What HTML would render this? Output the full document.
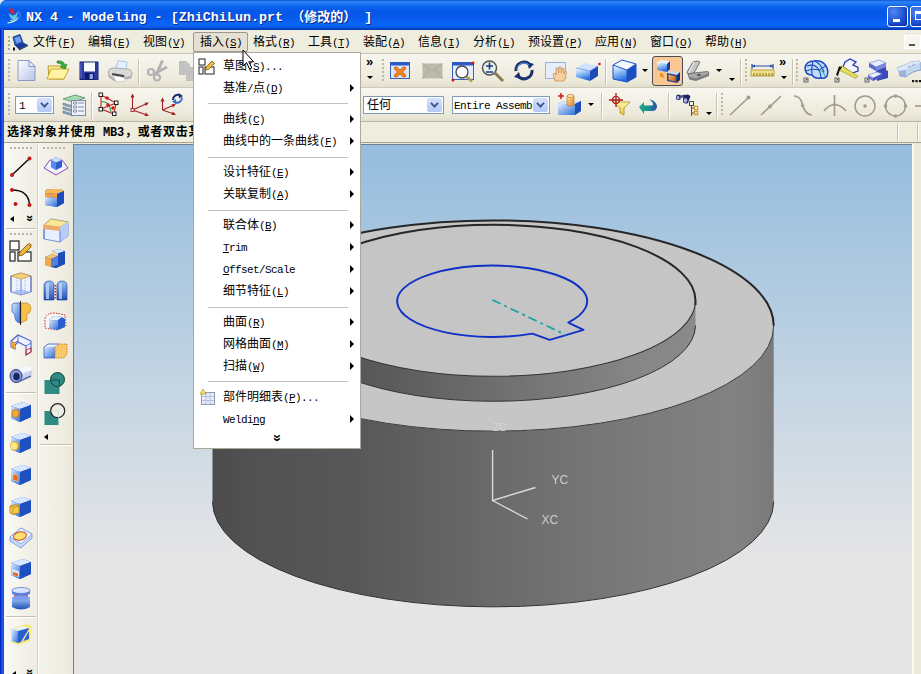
<!DOCTYPE html>
<html lang="zh"><head><meta charset="utf-8"><title>NX 4 - Modeling</title>
<style>
html,body{margin:0;padding:0}
body{width:921px;height:674px;overflow:hidden;position:relative;background:#ECE9D8;font:12px/14px "Liberation Sans","Noto Sans CJK SC",sans-serif;color:#000}
.abs{position:absolute}
svg{overflow:visible}
div{position:absolute;box-sizing:border-box}
.l{font-family:"Liberation Mono","Noto Sans CJK SC",monospace;font-size:11px;letter-spacing:-0.6px}
u{text-decoration:underline}
.title{left:0;top:0;width:921px;height:30px;background:linear-gradient(#0c55d8 0,#2f86f8 2px,#1c74f4 4px,#0a62ec 7px,#0658e8 11px,#0658ea 17px,#0a60f4 21px,#0c66f8 25px,#0a5cec 27px,#0446c8 28.5px,#0038a8 30px)}
.ttext{left:26px;top:8px;color:#fff;font:bold 13.4px/16px "Liberation Mono","Noto Sans CJK SC",monospace;white-space:pre;text-shadow:1px 1px 0 #0a2a80}
.tz{font:bold 13px/16px "Noto Sans CJK SC",sans-serif;letter-spacing:0}
.tbtn{top:6px;width:21px;height:21px;border:1px solid #fff;border-radius:3px;background:radial-gradient(circle at 30% 25%,#4f86f0,#1c50d0 60%,#0d3bb8);box-shadow:inset -1px -1px 2px #0a2f9c}
.tbtn i{position:absolute;display:block}
.menubar{left:4px;top:30px;width:917px;height:24px;background:#EFEDDE;border-bottom:1px solid #C9C6B6}
.mi{top:35px;height:14px;white-space:nowrap}
.mhot{left:193px;top:32px;width:55px;height:20px;background:#E4E1D2;border:1px solid #9D9A8C;border-radius:2px}
.mdibtn{left:904px;top:35px;width:17px;height:14px;background:#F6F5EE;border:1px solid #fff}
.mdibtn i{position:absolute;left:4px;top:8px;width:6px;height:2px;background:#555}
.tb1{left:4px;top:54px;width:917px;height:34px;background:linear-gradient(#F7F6EF,#EDEADB 80%,#E2DFCE);border-bottom:1px solid #CFCBB9}
.tb2{left:4px;top:88px;width:917px;height:34px;background:linear-gradient(#F7F6EF,#EDEADB 80%,#E2DFCE);border-bottom:1px solid #B9B6A6}
.grip{width:2px;background:repeating-linear-gradient(#BAB7A6 0,#BAB7A6 2px,transparent 2px,transparent 4px)}
.hgrip{height:2px;background:repeating-linear-gradient(90deg,#BAB7A6 0,#BAB7A6 2px,transparent 2px,transparent 4px)}
.vsep{width:2px;border-left:1px solid #C5C2B2;border-right:1px solid #fff}
.chev{font:bold 13px/10px "Liberation Sans",sans-serif;letter-spacing:-1px;width:12px;height:10px}
.vchev{font:bold 12px/10px "Liberation Sans",sans-serif;width:10px;height:12px;transform:rotate(90deg)}
.dd{width:0;height:0;border:3px solid transparent;border-top:3px solid #000;border-bottom:0}
.tri-l{width:0;height:0;border:3px solid transparent;border-right:4px solid #000;border-left:0}
.pressed{width:31px;height:30px;background:#F9C792;border:1px solid #4B4B5A;border-radius:3px}
.combo{height:18px;background:#fff;border:1px solid #7F9DB9;padding:1px 0 0 3px;white-space:nowrap;overflow:hidden}
.combo b{position:absolute;right:1px;top:1px;width:15px;height:14px;background:linear-gradient(#D5E0FB,#B4C8F6);border-radius:2px}
.combo b:after{content:"";position:absolute;left:4px;top:2px;width:7px;height:7px;border-right:2.5px solid #3A4F8A;border-bottom:2.5px solid #3A4F8A;transform:rotate(45deg) scale(.85);box-sizing:border-box}
.status{left:4px;top:122px;width:917px;height:21px;background:#EFEDDE;border-bottom:1px solid #A5A294}
.stext{left:7px;top:125px;font:bold 12px/14px "Liberation Sans","Noto Sans CJK SC",sans-serif;white-space:nowrap;width:186px;overflow:hidden;letter-spacing:.7px}
.stext .l{font-weight:bold;font-size:12px;letter-spacing:-.2px;margin-left:3px;margin-right:1px}
.stsep{top:124px;width:2px;height:17px;border-left:1px solid #C5C2B2;border-right:1px solid #fff}
.leftbar{left:4px;top:143px;width:70px;height:531px;background:linear-gradient(90deg,#F9F9F5,#EFEDE2 46%,#F4F3EB 50%,#ECE9DB)}
.lsep{left:37px;top:145px;width:2px;height:529px;border-left:1px solid #D4D1C2;border-right:1px solid #fff}
.hline{height:2px;border-top:1px solid #C5C2B2;border-bottom:1px solid #fff}
.popup{left:193px;top:52px;width:168px;height:397px;background:#fff;border:1px solid #ABA89C}
.pshadow{display:none}
.pi{left:29px;height:22px;line-height:22px;white-space:nowrap}
.parr{left:156px;width:0;height:0;border:4px solid transparent;border-left:4px solid #000;border-right:0}
.psep{left:14px;width:140px;height:1px;background:#C5C2B8}
.pchev{left:78px;top:380px;font:bold 14px/10px "Liberation Sans",sans-serif;transform:rotate(90deg);width:10px;height:12px}
.wbl{left:0;top:29px;width:4px;height:645px;background:linear-gradient(90deg,#001DB8,#0A34D4 30%,#2260EC 62%,#1244BC)}

</style></head>
<body>
<svg class="abs" width="0" height="0" style="left:0;top:0"><defs>
<linearGradient id="gb" x1="0" y1="0" x2="1" y2="1"><stop offset="0" stop-color="#DCEBFF"/><stop offset="1" stop-color="#2E6FD8"/></linearGradient>
<linearGradient id="gb2" x1="0" y1="0" x2="0" y2="1"><stop offset="0" stop-color="#9CC4F5"/><stop offset="1" stop-color="#1F4FB8"/></linearGradient>
<linearGradient id="gy" x1="0" y1="0" x2="0" y2="1"><stop offset="0" stop-color="#FFF6A8"/><stop offset="1" stop-color="#E8C63A"/></linearGradient>
<linearGradient id="go" x1="0" y1="0" x2="1" y2="1"><stop offset="0" stop-color="#FFE0A0"/><stop offset="1" stop-color="#E88A20"/></linearGradient>
<linearGradient id="gw" x1="0" y1="0" x2="1" y2="1"><stop offset="0" stop-color="#FFFFFF"/><stop offset="1" stop-color="#B8C4E8"/></linearGradient>
<linearGradient id="gcf" x1="0" y1="0" x2=".3" y2="1"><stop offset="0" stop-color="#FFFFFF"/><stop offset=".45" stop-color="#9CC6F8"/><stop offset="1" stop-color="#2A6FE0"/></linearGradient>
<linearGradient id="go2" x1="0" y1="0" x2="1" y2="1"><stop offset="0" stop-color="#F8B060"/><stop offset="1" stop-color="#C86010"/></linearGradient>
<linearGradient id="gg" x1="0" y1="0" x2="1" y2="1"><stop offset="0" stop-color="#E8E8E8"/><stop offset="1" stop-color="#8A8A8A"/></linearGradient>
</defs></svg>
<div class="title"></div>
<svg class="abs" style="left:6px;top:7px" width="18" height="18" viewBox="0 0 18 18"><path d="M3 2 L8 1.500 L8.500 7 L5.500 7.500Z" fill="#D82030"/><path d="M2.500 6 Q4 12 8 13 Q11 11 12.500 4 Q9 9 6 8.500Z" fill="#58C8E8"/><path d="M11 3.500 Q15.500 4 15 9 Q14 13 10 14 Q13.500 11 13 7.500Z" fill="#3A70E0"/><path d="M1 15.500 Q7 15 13 10.500 Q10 15.500 2 16.500Z" fill="#E8F8F0"/><path d="M4 13.500 Q8 14 12 10" stroke="#9AE0C8" stroke-width="1" fill="none"/></svg>
<div class="ttext">NX 4 - Modeling - [ZhiChiLun.prt <span class="tz">（修改的）</span> ]</div>
<div class="tbtn" style="left:887px"><i style="left:5px;top:12px;width:7px;height:3px;background:#fff"></i></div>
<div class="tbtn" style="left:910px"><i style="left:4px;top:4px;width:9px;height:9px;border:1px solid #fff;border-top-width:3px;box-sizing:border-box"></i></div>
<svg class="abs" style="left:0;top:0" width="6" height="6" viewBox="0 0 6 6"><path d="M0 0 H5 Q1 1 0 5Z" fill="#E8ECF4"/></svg>
<div class="menubar"></div>
<svg class="abs" style="left:6px;top:33px" width="24" height="18" viewBox="0 0 24 18"><g fill="#A8B090"><rect x="2" y="3" width="2" height="2"/><rect x="2" y="7" width="2" height="2"/><rect x="2" y="11" width="2" height="2"/><rect x="2" y="15" width="2" height="2"/></g><path d="M7 4 L14 1.500 L17 9.500 L9 12.500Z" fill="#2A5CC8" stroke="#12308A" stroke-width=".8"/><path d="M8.500 5 L13.500 3.200 L15.500 8.500 L10.500 10.500Z" fill="#6FA0F0"/><path d="M9 12.500 L17 9.500 L22 12 L13 16.500Z" fill="#1A3A98"/><path d="M13 16.500 L22 12 L22 13 L13 17.500Z" fill="#0A1A58"/><rect x="7" y="14.500" width="2" height="3" fill="#111"/></svg>
<div class="mhot"></div>
<div class="mi" style="left:33px">文件<span class="l">(<u>F</u>)</span></div>
<div class="mi" style="left:88px">编辑<span class="l">(<u>E</u>)</span></div>
<div class="mi" style="left:143px">视图<span class="l">(<u>V</u>)</span></div>
<div class="mi" style="left:200px">插入<span class="l">(<u>S</u>)</span></div>
<div class="mi" style="left:253px">格式<span class="l">(<u>R</u>)</span></div>
<div class="mi" style="left:308px">工具<span class="l">(<u>T</u>)</span></div>
<div class="mi" style="left:363px">装配<span class="l">(<u>A</u>)</span></div>
<div class="mi" style="left:418px">信息<span class="l">(<u>I</u>)</span></div>
<div class="mi" style="left:473px">分析<span class="l">(<u>L</u>)</span></div>
<div class="mi" style="left:528px">预设置<span class="l">(<u>P</u>)</span></div>
<div class="mi" style="left:595px">应用<span class="l">(<u>N</u>)</span></div>
<div class="mi" style="left:650px">窗口<span class="l">(<u>O</u>)</span></div>
<div class="mi" style="left:705px">帮助<span class="l">(<u>H</u>)</span></div>
<div class="mdibtn"><i></i></div>
<div class="tb1"></div><div class="tb2"></div>
<div class="grip" style="left:8px;top:59px;height:24px"></div>
<svg class="abs" style="left:15px;top:58px" width="24" height="24" viewBox="0 0 24 24"><path d="M3 2.5 H14 L20 8.5 V22.5 H3Z" fill="url(#gw)" stroke="#8C9AC8" stroke-width="1"/><path d="M14 2.5 V8.5 H20Z" fill="#E8EEFF" stroke="#8C9AC8" stroke-width="1"/></svg>
<svg class="abs" style="left:45px;top:58px" width="24" height="24" viewBox="0 0 24 24"><path d="M3 8 L4 21 H19 L21 8Z" fill="url(#gy)" stroke="#B89A28" stroke-width="1"/><path d="M2 21 L6 11 H24 L19 21Z" fill="#FFF2A0" stroke="#C8A830" stroke-width="1"/><path d="M12 3 Q18 2 20 7 L22 6 L20 11 L15 9 L17.5 8 Q16 5 12 5Z" fill="#3CA83C" stroke="#1E7A1E" stroke-width=".6"/></svg>
<svg class="abs" style="left:77px;top:58px" width="24" height="24" viewBox="0 0 24 24"><rect x="3" y="4" width="18" height="17.500" fill="#2A3AA0"/><rect x="3" y="4" width="18" height="17.500" fill="none" stroke="#18247A" stroke-width="1"/><rect x="7" y="4.500" width="11" height="9" fill="#F8FAFF"/><rect x="8" y="15" width="9" height="6.500" fill="#101A60"/><rect x="12.500" y="16" width="3.500" height="5" fill="#8AA0E0"/><path d="M4 5 V20" stroke="#5A70D0" stroke-width="1"/></svg>
<svg class="abs" style="left:107px;top:58px" width="24" height="24" viewBox="0 0 24 24"><path d="M11 2.500 L20 4 L18.500 13 L8.500 12Z" fill="#E4F0FF" stroke="#9AB8E0" stroke-width=".8"/><path d="M1.500 13 Q2 10 6 10 L21 11 Q25 12 25 15 L24 20 L8 23 L2 19Z" fill="#DADADA" stroke="#9A9A9A" stroke-width=".8"/><path d="M5 15 L17 17 L17.500 19.500 L5.500 17.500Z" fill="#444"/><path d="M2 19 L8 23 L24 20 L24 18 L8 21 L2 17Z" fill="#B0B0B0"/><path d="M6 17.500 L17 19.500 L19 23 L9 23.500Z" fill="#fff" stroke="#AAA" stroke-width=".5"/></svg>
<div class="vsep" style="left:138px;top:59px;height:26px"></div>
<svg class="abs" style="left:145px;top:58px" width="24" height="24" viewBox="0 0 24 24"><g stroke="#B2B2B2" fill="none"><path d="M17.500 2.500 L12 15 M22 9 L10 15.500" stroke-width="3"/><circle cx="6" cy="14" r="3" stroke-width="2.200"/><circle cx="12" cy="19.500" r="3" stroke-width="2.200"/></g></svg>
<svg class="abs" style="left:176px;top:58px" width="24" height="24" viewBox="0 0 24 24"><path d="M3 3 H10 L14 7 V9 H17 L21 13 V23 H10 V17 H3Z" fill="#BDBDBD"/><path d="M3 6 H14 M3 9 H14 M3 12 H21 M3 15 H21 M10 18 H21 M10 21 H21 M6 3 V17 M9 3 V17 M12 5 V23 M15 9 V23 M18 10 V23" stroke="#CFCFCF" stroke-width=".6"/></svg>
<div class="chev" style="left:366px;top:57px">»</div>
<div class="dd" style="left:367px;top:76px"></div>
<div class="grip" style="left:382px;top:59px;height:24px"></div>
<svg class="abs" style="left:388px;top:58px" width="24" height="24" viewBox="0 0 24 24"><rect x="2.500" y="4.500" width="19" height="16" fill="#DCE6FA" stroke="#3A5FC0" stroke-width="1"/><rect x="2.500" y="4.500" width="19" height="3" fill="#2C58C8"/><path d="M6.500 9 L9 9 L12 12 L15 9 L17.500 9 L17.500 11.500 L14.500 14 L17.500 16.500 L17.500 19 L15 19 L12 16 L9 19 L6.500 19 L6.500 16.500 L9.500 14 L6.500 11.500Z" fill="#F08020" stroke="#C05808" stroke-width=".6"/></svg>
<svg class="abs" style="left:418px;top:58px" width="24" height="24" viewBox="0 0 24 24"><rect x="4.500" y="5.500" width="20" height="15" fill="#BDBAAC"/><path d="M4.500 5.500 L14.500 13 L24.500 5.500 M4.500 20.500 L12 11 M24.500 20.500 L17 11" stroke="#B0AD9E" stroke-width="1.200" fill="none"/></svg>
<svg class="abs" style="left:449px;top:58px" width="24" height="24" viewBox="0 0 24 24"><rect x="3.5" y="4.5" width="21" height="17" fill="#E6EEFC" stroke="#3A5FC0" stroke-width="1"/><rect x="3.5" y="4.5" width="21" height="3" fill="#2C58C8"/><circle cx="13" cy="14" r="6" fill="#fff" fill-opacity=".7" stroke="#444" stroke-width="1.3"/><path d="M17.5 18.5 L23 23.5" stroke="#B89A50" stroke-width="2.6"/><circle cx="24" cy="5" r="1.5" fill="#C81818"/><circle cx="4" cy="22" r="1.5" fill="#C81818"/></svg>
<svg class="abs" style="left:480px;top:58px" width="24" height="24" viewBox="0 0 24 24"><circle cx="9.5" cy="10" r="7" fill="#E8F0E8" stroke="#555" stroke-width="1.5"/><path d="M6 8 H13 M9.5 4.5 V11.5 M6 14 H13" stroke="#1A3A8A" stroke-width="1.6"/><path d="M15 15 L23 23" stroke="#8A7A50" stroke-width="3"/></svg>
<svg class="abs" style="left:512px;top:58px" width="24" height="24" viewBox="0 0 24 24"><path d="M4 13 A8 8 0 0 1 18 7" stroke="#1A3070" stroke-width="3" fill="none"/><path d="M20 12 A8 8 0 0 1 6 18" stroke="#1A3070" stroke-width="3" fill="none"/><path d="M15 4 L22 6 L17 11Z" fill="#1A3070"/><path d="M9 21 L2 19 L7 14Z" fill="#1A3070"/><path d="M5 12 A7 7 0 0 1 17 7" stroke="#6A9AE8" stroke-width="1" fill="none"/></svg>
<svg class="abs" style="left:542px;top:58px" width="24" height="24" viewBox="0 0 24 24"><rect x="3.5" y="4.500" width="20" height="16" fill="#E6EEFC" stroke="#9AB0E0" stroke-width="1"/><path d="M13 23 L11 16 L13 15 L14 17 L14 10 L16 10 L16.500 15 L17 9 L19 9 L19.500 15 L20.500 10 L22 10.500 L22 16 L23 13 L24.500 13.500 L23.500 20 L22 23Z" fill="#F8D0A0" stroke="#C89058" stroke-width=".8"/></svg>
<svg class="abs" style="left:573px;top:58px" width="24" height="24" viewBox="0 0 24 24"><path d="M3 10 L12 5 L25 8 L17 13Z" fill="#CFE2FF"/><path d="M3 10 L17 13 V23 L3 19Z" fill="url(#gcf)"/><path d="M17 13 L25 8 V18 L17 23Z" fill="#1B4CB8"/><path d="M3 10 L17 13 L25 8" stroke="#5A8AE0" stroke-width=".7" fill="none"/><circle cx="26.500" cy="6" r="1.300" fill="#D01818"/></svg>
<div class="vsep" style="left:605px;top:59px;height:26px"></div>
<svg class="abs" style="left:611px;top:58px" width="24" height="24" viewBox="0 0 24 24"><path d="M2 7 L11 2 L25 6 L16 12Z" fill="#F4F9FF"/><path d="M2 7 L16 12 V24 L2 21Z" fill="url(#gcf)"/><path d="M16 12 L25 6 V19 L16 24Z" fill="#1C4FBE"/><path d="M2 7 L11 2 L25 6 V19 L16 24 L2 21Z M2 7 L16 12 L25 6 M16 12 V24" fill="none" stroke="#1A55C8" stroke-width="1"/></svg>
<div class="dd" style="left:642px;top:69px"></div>
<div class="pressed" style="left:652px;top:56px"></div>
<svg class="abs" style="left:655px;top:58px" width="24" height="24" viewBox="0 0 24 24"><path d="M2 4 L6 2 L15 3 L12 6Z" fill="#EAF3FF"/><path d="M2 4 L12 6 V14 L2 12Z" fill="url(#gcf)"/><path d="M12 6 L15 3 V11 L12 14Z" fill="#163E9A"/><path d="M12 15 L16 13 L25 14 L22 17Z" fill="#C8D8F0"/><path d="M12 15 L22 17 V25 L12 23Z" fill="#2C4A90"/><path d="M13.500 16.800 L20.500 18.200 V23.400 L13.500 22Z" fill="url(#go2)"/><path d="M22 17 L25 14 V22 L22 25Z" fill="#142E70"/><path d="M5 15 l4 1.200 l-1.500 1 l2 1.800 l-1.200 1 l-2 -1.800 l-1.300 1Z" fill="#E88A18"/></svg>
<svg class="abs" style="left:684px;top:58px" width="24" height="24" viewBox="0 0 24 24"><path d="M9 4 L13 3 L16 4 L10 15 L4 16 L3 14Z" fill="#C4C4C4" stroke="#6A6A6A" stroke-width=".9"/><path d="M9 4 L10 5 L4.500 15" stroke="#EEE" stroke-width="1" fill="none"/><path d="M4 16 L10 15 L24 13.500 L25 16 L12 21 L5 19.500Z" fill="#A8A8A8" stroke="#6A6A6A" stroke-width=".9"/><path d="M5 19.500 L12 21 L25 16 V18 L12 23 L5 21.500Z" fill="#7C7C7C"/><ellipse cx="15" cy="17" rx="2.200" ry="1" fill="#555"/></svg>
<div class="dd" style="left:716px;top:69px"></div>
<div class="dd" style="left:729px;top:78px"></div>
<div class="vsep" style="left:740px;top:59px;height:26px"></div>
<div class="grip" style="left:745px;top:59px;height:24px"></div>
<svg class="abs" style="left:750px;top:61px" width="24" height="24" viewBox="0 0 24 24"><rect x="1" y="9" width="23" height="6" fill="#F2E28A" stroke="#B8A040" stroke-width="1"/><path d="M4 12 V15 M7 12 V15 M10 12 V15 M13 12 V15 M16 12 V15 M19 12 V15 M22 12 V15" stroke="#8A7420" stroke-width="1"/><path d="M2 5 H23 M2 3 V8 M23 3 V8" stroke="#2A4AA8" stroke-width="1.2"/><path d="M2 5 L5 3.500 V6.500Z M23 5 L20 3.500 V6.500Z" fill="#2A4AA8"/></svg>
<div class="chev" style="left:779px;top:57px">»</div>
<div class="dd" style="left:781px;top:76px"></div>
<div class="vsep" style="left:792px;top:59px;height:26px"></div>
<div class="grip" style="left:796px;top:59px;height:24px"></div>
<svg class="abs" style="left:803px;top:58px" width="24" height="24" viewBox="0 0 24 24"><path d="M2 10 Q3 3 11 3 Q19 2 23 8 Q26 13 24 18 Q22 21 18 20 Q12 21 9 17 Q2 17 2 10Z" fill="#BFDDF8" stroke="#1F48C0" stroke-width="1.500"/><path d="M4 8 Q12 5 16 12 Q18 16 18 20 M10 3 Q8 10 9 17 M3 13 Q10 10 16 12 Q21 9 23 8 M12 3 Q18 6 21 14" stroke="#1F48C0" stroke-width="1.100" fill="none"/><path d="M16 12 Q20 12 22 18" stroke="#2AA8A0" stroke-width="1.100" fill="none"/><rect x="1" y="20" width="4" height="4" fill="#F4F4F4" stroke="#444" stroke-width=".8"/><path d="M2 22.800 L4 21.200 M4 21.200 h-1.300 M4 21.200 v1.300" stroke="#222" stroke-width=".6" fill="none"/></svg>
<svg class="abs" style="left:834px;top:58px" width="24" height="24" viewBox="0 0 24 24"><path d="M11 4 L16 1 L22 4 L19 7 L24 9.500 L24 13 L18 15 L9 9Z" fill="#F2F4FF" stroke="#2838B0" stroke-width="1.300"/><path d="M5 9 L8 8 L24 18 L22 20.500 L5 12Z" fill="#E6DC58" stroke="#9A9020" stroke-width=".6"/><path d="M2 17 L5 8.500 L8 9 L5.500 13 L4 18Z" fill="#111"/><rect x="1" y="20" width="4" height="4" fill="#F4F4F4" stroke="#444" stroke-width=".8"/><path d="M2 22.800 L4 21.200 M4 21.200 h-1.300 M4 21.200 v1.300" stroke="#222" stroke-width=".6" fill="none"/></svg>
<svg class="abs" style="left:865px;top:58px" width="24" height="24" viewBox="0 0 24 24"><path d="M4 5 L14 2 L21 5 L11 9Z" fill="#E8ECFF" stroke="#8A98E0" stroke-width=".8"/><path d="M4 5 L11 9 V13 L4 9Z" fill="#5A68D0"/><path d="M11 9 L21 5 V12 L23 13 V20 L12 23 V16 L11 15Z" fill="#3A48B8"/><path d="M11 9 L21 5 V9 L11 13Z" fill="#7A88E0"/><path d="M3 17 L12 14 L17 16 L8 20Z" fill="#EEF0FF" stroke="#8A98E0" stroke-width=".8"/><path d="M3 17 L8 20 V23 L3 20Z" fill="#6A78D8"/><path d="M8 20 L17 16 V19 L8 23Z" fill="#4A58C0"/><rect x="0" y="20" width="4" height="4" fill="#F4F4F4" stroke="#444" stroke-width=".8"/><path d="M1 22.800 L3 21.200 M3 21.200 h-1.300 M3 21.200 v1.300" stroke="#222" stroke-width=".6" fill="none"/></svg>
<svg class="abs" style="left:896px;top:58px" width="24" height="24" viewBox="0 0 24 24"><path d="M1 10 L9 7 Q15 3 22 3 L25 5 V12 Q16 13 10 19 L4 18 L3 13Z" fill="#C4D6EE" stroke="#7A96C8" stroke-width=".9"/><path d="M1 10 L9 7 Q15 3 22 3 L25 5 Q15 6 10 12 L3 13Z" fill="#DCE8F8"/><path d="M3 13 L10 12 L10 19 L4 18Z" fill="#9AB4DC"/><path d="M12 9 l3 -1 M16 7.500 l3 -1" stroke="#7A96C8" stroke-width=".8"/><rect x="16" y="22" width="2.200" height="2.200" fill="#111"/><rect x="19.400" y="22" width="2.200" height="2.200" fill="#111"/><rect x="22.800" y="22" width="2.200" height="2.200" fill="#111"/></svg>
<div class="grip" style="left:8px;top:93px;height:24px"></div>
<div class="combo" style="left:15px;top:96px;width:39px"><span class="l">1</span><b></b></div>
<svg class="abs" style="left:61px;top:92px" width="24" height="24" viewBox="0 0 24 24"><path d="M2 7 L14 3 L24 6 L12 10Z" fill="#A8D8B0" stroke="#5A8A6A" stroke-width=".8"/><path d="M2 11 L12 14 L12 16 L2 13Z M2 15 L12 18 L12 20 L2 17Z M2 19 L12 22 L12 24 L2 21Z" fill="#8AA8C0" stroke="#5A7088" stroke-width=".6"/><rect x="10.500" y="8.500" width="14" height="15" fill="#EEF2FA" stroke="#7A8AA8" stroke-width="1"/><path d="M12.500 12 h3 v-2 h-3z M12.500 16 h3 v-2 h-3z M12.500 20 h3 v-2 h-3z" fill="#fff" stroke="#5A6A8A" stroke-width=".7"/><path d="M17 11 H23 M17 15 H23 M17 19 H23" stroke="#7A8AA8" stroke-width="1"/></svg>
<div class="vsep" style="left:91px;top:93px;height:26px"></div>
<svg class="abs" style="left:97px;top:92px" width="24" height="24" viewBox="0 0 24 24"><path d="M4 3 V17 L17 22 M4 3 L19 11 L17 22 M4 17 L19 11" stroke="#C02020" stroke-width="1.1" fill="none"/><path d="M4 10 Q12 8 14 20" stroke="#2A9A4A" stroke-width="1.1" fill="none"/><g fill="#fff" stroke="#222" stroke-width="1"><rect x="2" y="1" width="3.500" height="3.500"/><rect x="2" y="15.500" width="3.500" height="3.500"/><rect x="17.500" y="9" width="3.500" height="3.500"/><rect x="15.500" y="20" width="3.500" height="3.500"/></g><g fill="#D01818"><circle cx="10" cy="6" r="1.800"/><circle cx="11" cy="13" r="1.800"/><circle cx="16" cy="16" r="1.800"/></g></svg>
<svg class="abs" style="left:127px;top:92px" width="24" height="24" viewBox="0 0 24 24"><g stroke="#A02222" stroke-width="1.100" fill="none"><path d="M5.500 18 V3 M5.500 18 L20 11.500 M5.500 18 L20 23"/></g><path d="M5.500 1.500 L3.500 5.500 H7.500Z M22 10.500 L17.500 10.800 L19 14Z M22 24 L17.500 24 L18.800 20.500Z" fill="#A02222"/><rect x="4" y="16.500" width="3" height="3" fill="#FFE8E0" stroke="#A02222" stroke-width=".9"/></svg>
<svg class="abs" style="left:157px;top:92px" width="24" height="24" viewBox="0 0 24 24"><g stroke="#A02222" stroke-width="1.100" fill="none"><path d="M5.500 18 V7 M5.500 18 L17 13 M5.500 18 L17 22"/></g><path d="M5.500 5.500 L3.500 9.500 H7.500Z M19 12 L14.500 12.300 L16 15.500Z M19 23 L14.500 23 L15.800 19.500Z" fill="#A02222"/><path d="M16 8 A5 5 0 0 1 23 3.200" stroke="#1A2F78" stroke-width="2" fill="none"/><path d="M25 5.500 A5 5 0 0 1 18 10.300" stroke="#3C6CD0" stroke-width="2" fill="none"/><path d="M21.500 1 L26 4 L22 6.500Z" fill="#1A2F78"/><path d="M19.500 12.500 L15 9.500 L19 7Z" fill="#3C6CD0"/></svg>
<div class="combo" style="left:363px;top:96px;width:81px">任何<b></b></div>
<div class="combo" style="left:452px;top:96px;width:98px;padding-left:1px"><span class="l">Entire Assemb</span><b></b></div>
<svg class="abs" style="left:556px;top:92px" width="24" height="24" viewBox="0 0 24 24"><path d="M2 12 L8 9 L25 9 L25 19 L19 23 L2 23Z" fill="#3A78E0"/><path d="M2 12 L8 9 L25 9 L19 12Z" fill="#CFE4FF"/><path d="M2 12 H19 V23 H2Z" fill="url(#gb)"/><path d="M19 12 L25 9 V19 L19 23Z" fill="#1E4EB8"/><path d="M11 4 Q14 2 18 4 V13 Q14 15 11 13Z" fill="url(#go)" stroke="#B86A18" stroke-width=".6"/><ellipse cx="14.500" cy="4" rx="3.500" ry="1.500" fill="#FFE8B0" stroke="#B86A18" stroke-width=".6"/><path d="M5 1 V7 M2 4 H8" stroke="#D01818" stroke-width="1.500"/></svg>
<div class="dd" style="left:588px;top:103px"></div>
<div class="vsep" style="left:601px;top:93px;height:26px"></div>
<svg class="abs" style="left:607px;top:92px" width="24" height="24" viewBox="0 0 24 24"><path d="M6 10 H23 L17 16 V23 L13 21 V16Z" fill="url(#gy)" stroke="#B88A18" stroke-width=".8"/><path d="M9 1 V15 M2 8 H16" stroke="#A81818" stroke-width="1.300"/><circle cx="9" cy="8" r="3.500" fill="none" stroke="#A81818" stroke-width="1.200"/></svg>
<svg class="abs" style="left:637px;top:95px" width="24" height="24" viewBox="0 0 24 24"><defs><linearGradient id="gun" x1="0" y1="0" x2="1" y2="0"><stop offset="0" stop-color="#18A884"/><stop offset=".55" stop-color="#1E9090"/><stop offset="1" stop-color="#2A50A8"/></linearGradient></defs><path d="M2 12 L7 7 V10.500 H15 Q17 10 15.500 7.500 L12.500 4.200 Q19 6 20 11 Q20 16 15 16 H7 V19Z" fill="url(#gun)"/></svg>
<div class="vsep" style="left:668px;top:93px;height:26px"></div>
<svg class="abs" style="left:675px;top:92px" width="24" height="24" viewBox="0 0 24 24"><path d="M1 5 Q1 2.500 3.500 2.500 L6 3.500 L5.500 7.500 Q3 8.500 1 7Z" fill="#2A2C78"/><ellipse cx="3" cy="5.500" rx="1.300" ry="1.600" fill="#B8C0F0"/><path d="M6 3.500 L9 2.500 L9 5 L6 6Z" fill="#3A6A50"/><path d="M9 3 L13 2.500 L15.500 4 L13 11 Q10 12.500 8 10 Q7.500 6 9 3Z" fill="#1E2468"/><ellipse cx="10.500" cy="8.500" rx="1.800" ry="2.300" fill="#A8B0E8"/><rect x="14.500" y="9.500" width="4" height="4" fill="#F8F8F0" stroke="#4A4A28" stroke-width="1"/><path d="M16.500 14 V24 M16.500 16 H19 M16.500 21 H19" stroke="#5A3A98" stroke-width="1" fill="none"/><rect x="19.300" y="14.300" width="3.400" height="3.400" fill="#FFF0B0" stroke="#C88A28" stroke-width="1"/><rect x="19.300" y="19.300" width="3.400" height="3.400" fill="#FFE070" stroke="#C88A28" stroke-width="1"/></svg>
<div class="dd" style="left:706px;top:112px"></div>
<div class="vsep" style="left:716px;top:93px;height:26px"></div>
<div class="grip" style="left:721px;top:93px;height:24px"></div>
<svg class="abs" style="left:728px;top:93px" width="24" height="24" viewBox="0 0 24 24"><path d="M2 22 L20 5" stroke="#A29C89" stroke-width="1.600"/><circle cx="20.500" cy="4.500" r="2" fill="#A29C89"/></svg>
<svg class="abs" style="left:759px;top:93px" width="24" height="24" viewBox="0 0 24 24"><path d="M2 22 L22 3" stroke="#A29C89" stroke-width="1.600"/><circle cx="11" cy="13.500" r="2" fill="#A29C89"/></svg>
<svg class="abs" style="left:791px;top:93px" width="24" height="24" viewBox="0 0 24 24"><path d="M3 3 Q9 3 11 10 Q14 22 21 22" stroke="#A29C89" stroke-width="1.700" fill="none"/><circle cx="11.500" cy="12.500" r="1.600" fill="#A29C89"/></svg>
<svg class="abs" style="left:822px;top:93px" width="24" height="24" viewBox="0 0 24 24"><path d="M12.500 2 V23 M2 18 Q12.500 5 24 18" stroke="#A29C89" stroke-width="1.600" fill="none"/><circle cx="12.500" cy="11.500" r="1.600" fill="#A29C89"/></svg>
<svg class="abs" style="left:852px;top:93px" width="24" height="24" viewBox="0 0 24 24"><circle cx="13" cy="13" r="10" stroke="#A29C89" stroke-width="1.500" fill="none"/><circle cx="13" cy="13" r="1.800" fill="#A29C89"/></svg>
<svg class="abs" style="left:883px;top:93px" width="24" height="24" viewBox="0 0 24 24"><circle cx="12.500" cy="13" r="10" stroke="#A29C89" stroke-width="1.500" fill="none"/><g fill="#A29C89"><circle cx="12.500" cy="3" r="1.800"/><circle cx="2.500" cy="13" r="1.800"/><circle cx="22.500" cy="13" r="1.800"/><circle cx="12.500" cy="23" r="1.800"/></g></svg>
<svg class="abs" style="left:912px;top:93px" width="24" height="24" viewBox="0 0 24 24"><path d="M3 13 H12" stroke="#A29C89" stroke-width="1.600"/></svg>
<div class="status"></div>
<div class="stext">选择对象并使用 <span class="l">MB3</span>，或者双击某一对象</div>
<div class="stsep" style="left:897px"></div><div class="stsep" style="left:917px"></div>
<div class="leftbar"></div>
<div class="lsep"></div>
<div class="hgrip" style="left:10px;top:147px;width:24px"></div>
<div class="hgrip" style="left:43px;top:147px;width:24px"></div>
<svg class="abs" style="left:9px;top:155px" width="24" height="24" viewBox="0 0 24 24"><path d="M3 20 L20 4" stroke="#111" stroke-width="1.500"/><circle cx="3" cy="20" r="2" fill="#C01818"/><circle cx="20.500" cy="3.500" r="2" fill="#C01818"/></svg>
<svg class="abs" style="left:9px;top:185px" width="24" height="24" viewBox="0 0 24 24"><path d="M3 5 Q19 5 20.500 19" stroke="#111" stroke-width="1.500" fill="none"/><circle cx="3" cy="5" r="2" fill="#C01818"/><circle cx="20.500" cy="20" r="2" fill="#C01818"/><circle cx="6.500" cy="19" r="2" fill="#C01818"/></svg>
<div class="tri-l" style="left:10px;top:216px"></div>
<div class="vchev" style="left:24px;top:214px">»</div>
<div class="hline" style="left:6px;top:228px;width:30px"></div>
<div class="hgrip" style="left:10px;top:233px;width:24px"></div>
<div class="hline" style="left:6px;top:392px;width:30px"></div>
<div class="hline" style="left:40px;top:444px;width:32px"></div>
<svg class="abs" style="left:9px;top:239px" width="24" height="24" viewBox="0 0 24 24"><g fill="#fff" stroke="#222" stroke-width="1.200"><rect x="1" y="2" width="9" height="9"/><rect x="1" y="13" width="5" height="9"/><rect x="9" y="13" width="13" height="9"/></g><path d="M11 13 L19 5 L22 8 L14 16 L10 17Z" fill="#F0B838" stroke="#6A4A10" stroke-width=".8"/><path d="M19 5 L20.500 3.500 L23.500 6.500 L22 8Z" fill="#C89048"/></svg>
<svg class="abs" style="left:9px;top:270px" width="24" height="24" viewBox="0 0 24 24"><path d="M2 6 L12 3 L22 6 L22 22 L12 25 L2 22Z" fill="#EEF3FF" stroke="#5A70C0" stroke-width=".8"/><path d="M2 6 L12 3 L22 6 L12 9Z" fill="#F8D078" stroke="#C89030" stroke-width=".6"/><path d="M12 9 V25 M2 6 V22 M22 6 V22" stroke="#4A60B8" stroke-width=".8"/><path d="M2 22 L12 25 L22 22 L12 19Z" fill="#9AB4F0" fill-opacity=".7"/><path d="M8 8 V23 M16 8 V23" stroke="#7A8AC8" stroke-width=".6" stroke-dasharray="1 1"/></svg>
<svg class="abs" style="left:9px;top:301px" width="24" height="24" viewBox="0 0 24 24"><path d="M3 4 Q3 2 7 2 H11 V22 Q6 21 6 16 Q6 12 3 11Z" fill="url(#gb)" stroke="#3A5AC0" stroke-width=".7"/><path d="M12 2 H18 Q22 3 22 8 Q22 12 18 13 V19 L12 22Z" fill="#F8C048" stroke="#B88018" stroke-width=".6"/><path d="M11.500 0 V24" stroke="#222" stroke-width="1"/></svg>
<svg class="abs" style="left:9px;top:332px" width="24" height="24" viewBox="0 0 24 24"><path d="M2 9 L9 3 L22 9 L22 20 L17 23 L17 14 L9 10 L6 13 L6 17 L2 15Z" fill="#EEF3FF" stroke="#4A60C8" stroke-width="1.100"/><path d="M9 3 V10 M2 9 L6 11 L9 8 M17 14 L22 11" stroke="#4A60C8" stroke-width=".8" fill="none"/><path d="M2 9 L6 11 V17 L2 15Z" fill="#F0A030"/><path d="M17 18 L22 16 V20 L17 23Z" fill="none" stroke="#D02020" stroke-width=".9"/></svg>
<svg class="abs" style="left:9px;top:364px" width="24" height="24" viewBox="0 0 24 24"><path d="M7 6 L19 2 Q24 4 23 11 L11 17Z" fill="#C8D4EE"/><path d="M7 6 L19 2 Q23 3 23 6 L9 11Z" fill="#F4F7FF"/><ellipse cx="7" cy="12" rx="6" ry="6.500" fill="#8A9AD0" stroke="#2A3A8A" stroke-width="1"/><ellipse cx="7.500" cy="12.500" rx="3.200" ry="3.800" fill="#1A2460"/><path d="M9 18 L22 12" stroke="#5A6AA8" stroke-width="1.500"/></svg>
<svg class="abs" style="left:9px;top:399px" width="24" height="24" viewBox="0 0 24 24"><path d="M2 7 L14 3 L22 6 L22 18 L11 23 L2 19Z" fill="#2A5ED0"/><path d="M2 7 L14 3 L22 6 L11 10Z" fill="#D8E8FF"/><path d="M2 7 L11 10 V23 L2 19Z" fill="url(#gb)"/><path d="M11 10 L22 6 V18 L11 23Z" fill="#1E50C0"/><ellipse cx="6.500" cy="14.500" rx="3.500" ry="4" fill="#F8A838" stroke="#B86A10" stroke-width=".7"/></svg>
<svg class="abs" style="left:9px;top:430px" width="24" height="24" viewBox="0 0 24 24"><path d="M2 7 L14 3 L22 6 L22 18 L11 23 L2 19Z" fill="#2A5ED0"/><path d="M2 7 L14 3 L22 6 L11 10Z" fill="#D8E8FF"/><path d="M2 7 L11 10 V23 L2 19Z" fill="url(#gb)"/><path d="M11 10 L22 6 V18 L11 23Z" fill="#1E50C0"/><ellipse cx="5.500" cy="16" rx="4" ry="4.200" fill="#FFD858" stroke="#B88A10" stroke-width=".7"/><ellipse cx="4.500" cy="16" rx="3" ry="3.600" fill="#FFE888"/></svg>
<svg class="abs" style="left:9px;top:462px" width="24" height="24" viewBox="0 0 24 24"><path d="M2 7 L14 3 L22 6 L22 18 L11 23 L2 19Z" fill="#2A5ED0"/><path d="M2 7 L14 3 L22 6 L11 10Z" fill="#D8E8FF"/><path d="M2 7 L11 10 V23 L2 19Z" fill="url(#gb)"/><path d="M11 10 L22 6 V18 L11 23Z" fill="#1E50C0"/><path d="M4 12 L9 13.500 V19.500 L4 18Z" fill="#E86818" stroke="#F8C088" stroke-width=".7"/></svg>
<svg class="abs" style="left:9px;top:494px" width="24" height="24" viewBox="0 0 24 24"><path d="M2 7 L14 3 L22 6 L22 18 L11 23 L2 19Z" fill="#2A5ED0"/><path d="M2 7 L14 3 L22 6 L11 10Z" fill="#D8E8FF"/><path d="M2 7 L11 10 V23 L2 19Z" fill="url(#gb)"/><path d="M11 10 L22 6 V18 L11 23Z" fill="#1E50C0"/><path d="M1 12 L7 10.500 L10 12 V19 L4 20.500 L1 19Z" fill="#F8C848" stroke="#A87818" stroke-width=".7"/><path d="M1 12 L4 13.500 L10 12 M4 13.500 V20.500" stroke="#A87818" stroke-width=".6" fill="none"/></svg>
<svg class="abs" style="left:9px;top:525px" width="24" height="24" viewBox="0 0 24 24"><path d="M1 12 L12 3 L23 9 L23 13 L12 23 L1 16Z" fill="#C8D8F8" stroke="#6A8AD8" stroke-width=".8"/><path d="M1 12 L12 3 L23 9 L12 19Z" fill="#E8F0FF" stroke="#6A8AD8" stroke-width=".6"/><ellipse cx="11" cy="11" rx="6.500" ry="4" fill="#FFE070" stroke="#D04820" stroke-width="1" transform="rotate(-12 11 11)"/></svg>
<svg class="abs" style="left:9px;top:556px" width="24" height="24" viewBox="0 0 24 24"><path d="M2 7 L14 3 L22 6 L22 18 L11 23 L2 19Z" fill="#2A5ED0"/><path d="M2 7 L14 3 L22 6 L11 10Z" fill="#D8E8FF"/><path d="M2 7 L11 10 V23 L2 19Z" fill="url(#gb)"/><path d="M11 10 L22 6 V18 L11 23Z" fill="#1E50C0"/><path d="M3 13 L10 15 V21 L3 19Z" fill="#D8E4FA"/><path d="M4 16 L9 17.500 V20.500 L4 19Z" fill="#E86818"/></svg>
<svg class="abs" style="left:9px;top:587px" width="24" height="24" viewBox="0 0 24 24"><path d="M3 11 V20 Q12 25 21 20 V11Z" fill="url(#gb2)"/><path d="M5 8 H19 V12 H5Z" fill="#E84858"/><path d="M3 3 V7 Q12 11 21 7 V3Z" fill="#5A80E0"/><ellipse cx="12" cy="3.500" rx="9" ry="3" fill="#D8E6FF" stroke="#4A6AC8" stroke-width=".7"/><ellipse cx="12" cy="11" rx="9" ry="2.500" fill="#7AA0F0"/></svg>
<div class="hline" style="left:6px;top:616px;width:30px"></div>
<svg class="abs" style="left:9px;top:622px" width="24" height="24" viewBox="0 0 24 24"><path d="M2 7 L17 2 L23 4 L21 19 L9 23 L2 20Z" fill="#F8E878"/><path d="M3 7 L15 4 L20 6 L9 9Z" fill="#E8F0FF"/><path d="M3 7 L9 9 V21 L3 19Z" fill="url(#gb)"/><path d="M9 9 L20 6 V17 L9 21Z" fill="#2A5ED0"/><path d="M12 20 L21 5 L22 5.500 L14 19.500Z" fill="#F8F0A0"/></svg>
<div class="tri-l" style="left:12px;top:671px"></div>
<div class="vchev" style="left:24px;top:668px">»</div>
<svg class="abs" style="left:43px;top:154px" width="24" height="24" viewBox="0 0 24 24"><path d="M1 14 L7 6 L19 6 L25 14 L13 21Z" fill="#F4F0FF" stroke="#7A3AA8" stroke-width=".9"/><path d="M8 6 L13 3 L19 6 L19 13 L13 16 L8 13Z" fill="#2A5ED0"/><path d="M8 6 L13 3 L19 6 L13 8.500Z" fill="#C8DCFF"/><path d="M8 6 L13 8.500 V16 L8 13Z" fill="#5A8AE8"/></svg>
<svg class="abs" style="left:43px;top:186px" width="24" height="24" viewBox="0 0 24 24"><path d="M2 6 Q2 3 8 3 L17 3 L21 5 V17 L14 21 L2 19Z" fill="#2A5ED0"/><path d="M2 6 Q3 3 8 3 L17 3 L21 5 L14 8 L2 7Z" fill="#F8B858"/><path d="M2 7 L14 8 V12 L2 11Z" fill="#F0A040"/><path d="M2 11 L14 12 V21 L2 19Z" fill="url(#gb)"/><path d="M14 8 L21 5 V17 L14 21Z" fill="#1E4CB8"/></svg>
<svg class="abs" style="left:43px;top:217px" width="24" height="24" viewBox="0 0 24 24"><path d="M1 8 L8 2 L25 5 L25 19 L17 25 L1 22Z" fill="#E8F0FF" stroke="#5A78D0" stroke-width=".8"/><path d="M1 8 L8 2 L25 5 L17 10Z" fill="#F8E898" stroke="#C8A030" stroke-width=".6"/><path d="M1 8 L17 10 V14 L1 12Z" fill="#F0A868"/><path d="M17 10 L25 5 V19 L17 25Z" fill="#B8CCF8"/><path d="M1 12 V22 M17 14 V25" stroke="#4A60C8" stroke-width=".8"/></svg>
<svg class="abs" style="left:43px;top:248px" width="24" height="24" viewBox="0 0 24 24"><path d="M2 9 L9 6 L9 3 L16 1 L22 3 V16 L13 20 L2 17Z" fill="#2A5ED0"/><path d="M9 3 L16 1 L22 3 L15 5.500Z" fill="#D8E8FF"/><path d="M2 9 L9 6 L15 8 L8 11Z" fill="#F8C068"/><path d="M2 9 L8 11 V19 L2 17Z" fill="#F0A848"/><path d="M8 11 L15 8 V5.500 L22 3 V16 L13 20 L8 19Z" fill="#1E4CB8"/><path d="M9 3 L15 5.500 V8 L9 6Z" fill="#F4D8A0"/><path d="M15 8 V17 L8 19 V11Z" fill="#7AA0F0" fill-opacity=".6"/></svg>
<svg class="abs" style="left:43px;top:279px" width="24" height="24" viewBox="0 0 24 24"><path d="M1 7 Q1 2 6 2 Q11 2 11 7 V21 H1Z" fill="url(#gb2)" stroke="#1A3A98" stroke-width=".6"/><path d="M14 7 Q14 2 19 2 Q24 2 24 7 V21 H14Z" fill="url(#gb2)" stroke="#1A3A98" stroke-width=".6"/><path d="M3 7 Q3 4 6 4 V20 H3Z M16 7 Q16 4 19 4 V20 H16Z" fill="#CFE0FF" fill-opacity=".7"/><path d="M12.500 6 V21" stroke="#D02020" stroke-width="1.600" stroke-dasharray="1.500 1.500"/></svg>
<svg class="abs" style="left:43px;top:310px" width="24" height="24" viewBox="0 0 24 24"><path d="M2 9 Q3 3 12 3 L22 5 L23 16 L13 20 L2 18Z" fill="#FFF" fill-opacity=".5" stroke="#D02828" stroke-width="1" stroke-dasharray="1.500 1.200"/><path d="M6 11 Q7 6 13 6 L19 7 L22 9 V17 L15 20 L6 18Z" fill="#2A5ED0"/><path d="M6 11 Q7 6 13 6 L19 7 L15 10Z" fill="#E8F0FF"/><path d="M6 11 L15 10 V20 L6 18Z" fill="url(#gb)"/></svg>
<svg class="abs" style="left:43px;top:341px" width="24" height="24" viewBox="0 0 24 24"><path d="M1 6 L5 3 L16 3 L12 6Z" fill="#E8F0FF"/><path d="M1 6 H12 V17 H1Z" fill="url(#gb)"/><path d="M12 6 L16 3 L24 3 L24 13 L21 17 L12 17Z" fill="#F8C868" stroke="#C87818" stroke-width=".8" stroke-dasharray="1.500 1"/><path d="M1 6 L5 3 L16 3 M1 6 V17 H12" stroke="#3A5AC0" stroke-width=".8" fill="none"/></svg>
<svg class="abs" style="left:43px;top:372px" width="24" height="24" viewBox="0 0 24 24"><rect x="1.500" y="8" width="15" height="14" fill="#2E8A82"/><circle cx="14.500" cy="7.500" r="7" fill="#2E8A82" stroke="#14403C" stroke-width="1"/><path d="M7.500 8 H16.500 V14" stroke="#14403C" stroke-width=".8" fill="none"/></svg>
<svg class="abs" style="left:43px;top:401px" width="24" height="24" viewBox="0 0 24 24"><rect x="1.500" y="10" width="14" height="14" fill="#2E8A82"/><circle cx="14.700" cy="9.700" r="7" fill="#F0EEE2" stroke="#222" stroke-width="1.200"/><path d="M8 10 H15.500 V17.500" stroke="#BFE0DC" stroke-width=".8" fill="none"/></svg>
<div class="tri-l" style="left:44px;top:434px"></div>
<svg class="abs" style="left:0;top:0" width="921" height="674" viewBox="0 0 921 674">
<defs>
<linearGradient id="bg" x1="0" y1="0" x2="0" y2="1"><stop offset="0" stop-color="#95BDDE"/><stop offset="0.78" stop-color="#E5E5E6"/><stop offset="1" stop-color="#E6E6E6"/></linearGradient>
<linearGradient id="cyl" gradientUnits="userSpaceOnUse" x1="212" y1="0" x2="774" y2="0"><stop offset="0" stop-color="#4C4C4C"/><stop offset="0.08" stop-color="#525252"/><stop offset="0.25" stop-color="#575757"/><stop offset="0.5" stop-color="#6A6A6A"/><stop offset="0.75" stop-color="#7A7A7A"/><stop offset="0.93" stop-color="#828282"/><stop offset="1" stop-color="#7A7A7A"/></linearGradient>
<linearGradient id="disc" gradientUnits="userSpaceOnUse" x1="291" y1="0" x2="696" y2="0"><stop offset="0" stop-color="#4C4C4C"/><stop offset="0.25" stop-color="#5C5C5C"/><stop offset="0.55" stop-color="#727272"/><stop offset="0.85" stop-color="#868686"/><stop offset="1" stop-color="#8A8A8A"/></linearGradient>
<clipPath id="vp"><rect x="74" y="145" width="838" height="529"/></clipPath>
</defs>
<rect x="73" y="144" width="839" height="530" fill="#6F7F8F"/><rect x="912" y="144" width="2" height="530" fill="#FBFAF4"/><rect x="914" y="144" width="7" height="530" fill="#EDEADA"/>
<g clip-path="url(#vp)">
<rect x="74" y="145" width="838" height="529" fill="url(#bg)"/>
<path d="M212.500 325.800 L212.500 501.500 A280.600 105.400 0 0 0 773.700 501.500 L773.700 325.800 A280.600 105.400 0 0 1 212.500 325.800Z" fill="url(#cyl)"/>
<path d="M212.500 501.500 A280.600 105.400 0 0 0 773.700 501.500" fill="none" stroke="#333" stroke-width="1"/>
<ellipse cx="493.100" cy="325.800" rx="280.600" ry="105.400" fill="#C6C6C6"/>
<path d="M212.500 325.800 A280.600 105.400 0 0 0 773.700 325.800" fill="none" stroke="#3A3A3A" stroke-width="1"/>
<path d="M212.500 325.800 A280.600 105.400 0 0 1 773.700 325.800" fill="none" stroke="#262626" stroke-width="2"/>
<path d="M291.500 300.500 L291.500 325.500 A202 75.800 0 0 0 695.500 325.500 L695.500 300.500 A202 75.800 0 0 1 291.500 300.500Z" fill="url(#disc)"/>
<path d="M291.500 325.500 A202 75.800 0 0 0 695.500 325.500" fill="none" stroke="#333" stroke-width="1"/>
<ellipse cx="493.500" cy="300.500" rx="202" ry="75.800" fill="#C5C5C5"/>
<path d="M291.500 300.500 A202 75.800 0 0 0 695.500 300.500" fill="none" stroke="#333" stroke-width="1.100"/>
<path d="M291.500 300.500 A202 75.800 0 0 1 695.500 300.500 L695.500 305" fill="none" stroke="#262626" stroke-width="2"/>
<path d="M532.300 333.600 A95 35.700 0 1 1 568.300 322.600 L583.500 329.900 L549.800 339.900Z" fill="none" stroke="#1030C6" stroke-width="1.900" stroke-linejoin="round"/>
<path d="M492.400 299.900 L566 335" stroke="#1FA3A3" stroke-width="1.800" stroke-dasharray="9 4 3 4"/>
<g stroke="#DADADA" stroke-width="1.400" fill="none"><path d="M492.600 450 L492.600 500.500 L535.500 487.500 M492.600 500.500 L527.500 519"/></g>
<g font-family="Liberation Sans, sans-serif" font-size="12" fill="#CDCDCD"><text x="551.5" y="484">YC</text><text x="541.5" y="524">XC</text></g>
<text x="493" y="431" font-family="Liberation Sans, sans-serif" font-size="10" fill="#D6D6D6">ZC</text>
</g>
</svg>

<div class="pshadow"></div><div class="popup">
<div class="pi" style="top:2px">草图<span class="l">(<u>S</u>)...</span></div>
<div class="pi" style="top:24px">基准<span class="l">/</span>点<span class="l">(<u>D</u>)</span></div>
<div class="parr" style="top:31px"></div>
<div class="pi" style="top:55px">曲线<span class="l">(<u>C</u>)</span></div>
<div class="parr" style="top:62px"></div>
<div class="pi" style="top:77px">曲线中的一条曲线<span class="l">(<u>F</u>)</span></div>
<div class="parr" style="top:84px"></div>
<div class="pi" style="top:108px">设计特征<span class="l">(<u>E</u>)</span></div>
<div class="parr" style="top:115px"></div>
<div class="pi" style="top:130px">关联复制<span class="l">(<u>A</u>)</span></div>
<div class="parr" style="top:137px"></div>
<div class="pi" style="top:161px">联合体<span class="l">(<u>B</u>)</span></div>
<div class="parr" style="top:168px"></div>
<div class="pi" style="top:183px"><span class="l"><u>T</u>rim</span></div>
<div class="parr" style="top:190px"></div>
<div class="pi" style="top:205px"><span class="l"><u>O</u>ffset/Scale</span></div>
<div class="parr" style="top:212px"></div>
<div class="pi" style="top:227px">细节特征<span class="l">(<u>L</u>)</span></div>
<div class="parr" style="top:234px"></div>
<div class="pi" style="top:258px">曲面<span class="l">(<u>R</u>)</span></div>
<div class="parr" style="top:265px"></div>
<div class="pi" style="top:280px">网格曲面<span class="l">(<u>M</u>)</span></div>
<div class="parr" style="top:287px"></div>
<div class="pi" style="top:302px">扫描<span class="l">(<u>W</u>)</span></div>
<div class="parr" style="top:309px"></div>
<div class="pi" style="top:333px">部件明细表<span class="l">(<u>P</u>)...</span></div>
<div class="pi" style="top:355px"><span class="l">Weldi<u>n</u>g</span></div>
<div class="parr" style="top:362px"></div>
<div class="psep" style="top:50px"></div>
<div class="psep" style="top:104px"></div>
<div class="psep" style="top:157px"></div>
<div class="psep" style="top:254px"></div>
<div class="psep" style="top:328px"></div>
<div class="pchev">»</div>
</div>
<svg class="abs" style="left:198px;top:58px" width="18" height="18" viewBox="0 0 18 18"><g fill="#fff" stroke="#333" stroke-width="1.100"><rect x="1" y="1" width="6" height="6"/><rect x="1" y="9" width="4" height="7"/><rect x="7" y="9" width="9" height="7"/></g><path d="M8 9 L14 3 L16.500 5.500 L10.500 11.500 L7.500 12Z" fill="#F0B838" stroke="#6A4A10" stroke-width=".7"/></svg>
<svg class="abs" style="left:199px;top:388px" width="18" height="18" viewBox="0 0 18 18"><rect x="2.500" y="4.500" width="13" height="12" fill="#E4ECF8" stroke="#8A9AB8" stroke-width="1"/><path d="M2.500 8.500 H15.500 M2.500 12.500 H15.500 M7 4.500 V16.500 M11 4.500 V16.500" stroke="#A8B8D0" stroke-width=".8"/><path d="M1 6 L4 1 L7 6Z" fill="#F8E060" stroke="#A88A18" stroke-width=".6"/></svg>
<svg class="abs" style="left:242px;top:49px" width="14" height="22" viewBox="0 0 14 22"><path d="M1 1 L1 17 L4.6 13.6 L7.6 20 L9.8 19 L6.8 12.8 L11.6 12.8 Z" fill="#fff" stroke="#000" stroke-width="1"/></svg>
<div class="wbl"></div>
</body></html>
